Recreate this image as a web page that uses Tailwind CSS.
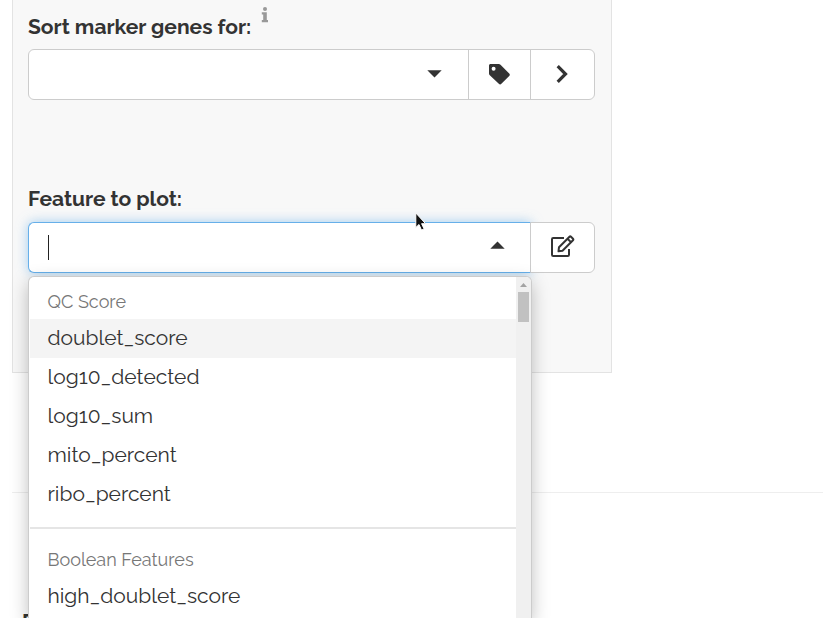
<!DOCTYPE html>
<html lang="en">
<head>
<meta charset="utf-8">
<title>Marker genes</title>
<script src="https://cdn.jsdelivr.net/npm/@tailwindcss/browser@4"></script>
</head>
<body class="relative h-[618px] w-[823px] overflow-hidden bg-white font-[Raleway,Lato,sans-serif] text-[21px] text-[#333]">
<main class="pl-3">
  <section class="h-[373px] w-[600px] border border-t-0 border-[#e3e3e3] bg-[#f8f8f8] px-[15px]">
    <div class="flex h-[49px] items-start pt-[12px]">
      <label class="w-[232px] font-bold leading-[30px] whitespace-nowrap">Sort marker genes for:</label>
      <svg class="-mt-[5px] ml-px h-[16px] w-[8px]" viewBox="0 0 8 16" fill="#999"><circle cx="4" cy="2" r="2"/><path d="M.8 5.2h5V13H7v2.2H.8V13h1.4V7.4H.8z"/></svg>
    </div>
    <div class="flex h-[51px] w-[567px] rounded-[6px] border border-[#ccc] bg-white">
      <div class="flex w-[439px] items-center justify-end pr-[26px]"><svg class="-mt-[1px] h-[8px] w-[15px]" viewBox="0 0 15 8" fill="#333"><path d="M.3.3h14.4L7.5 7.5z"/></svg></div>
      <button class="flex w-[62px] items-center justify-center border-l border-[#ccc]"><svg class="-mt-px h-[23px] w-[23px]" viewBox="0 0 23 23" fill="#333"><path fill-rule="evenodd" d="M2.5 1h8.2c.7 0 1.3.3 1.8.8l8.7 8.7c.8.8.8 1.7 0 2.5l-7.8 7.8c-.8.8-1.8.8-2.6 0L1.8 12.3c-.5-.5-.8-1.1-.8-1.8v-8C1 1.7 1.7 1 2.5 1zM5.6 3.7a2 2 0 1 0 0 4 2 2 0 0 0 0-4z"/></svg></button>
      <button class="flex flex-1 items-center justify-center border-l border-[#ccc]"><svg class="-mt-[2px] h-[20px] w-[14px]" viewBox="0 0 14 20" fill="none" stroke="#333" stroke-width="3.2"><path d="m1.7 2.2 7.8 7.8-7.8 7.8"/></svg></button>
    </div>
    <div class="flex h-[122px] items-end pb-[8px]"><label class="font-bold leading-[30px]">Feature to plot:</label></div>
    <div class="relative flex h-[51px] w-[567px]">
      <div class="flex w-[503px] items-center justify-between rounded-l-[6px] border border-r-0 border-[#66afe9] bg-white pl-[19px] pr-[26px] shadow-[0_0_12px_rgba(102,175,233,.6)]"><span class="h-[25px] w-px bg-[#222]"></span><svg class="-mt-[5px] h-[8px] w-[15px]" viewBox="0 0 15 8" fill="#333"><path d="M.3 7.7h14.4L7.5.5z"/></svg></div>
      <button class="-ml-px flex w-[65px] items-center justify-center rounded-r-[6px] border border-[#ccc] bg-white"><svg class="-mt-[4px] mr-px h-[24px] w-[25px]" viewBox="0 0 25 24" fill="none" stroke="#333" stroke-width="2" stroke-linejoin="round"><path d="M14 4H3.2C2.4 4 2 4.4 2 5.2v15.6c0 .8.4 1.2 1.2 1.2h14.6c.8 0 1.2-.4 1.2-1.2V15"/><path d="m9 13.2 10.5-10.5c.5-.5 1-.5 1.5 0l2 2c.5.5.5 1 0 1.5L12.5 16.7l-4 .6z"/><path d="m17.5 4.7 3.7 3.7"/></svg></button>
    </div>
  </section>
  <hr class="mt-[119px] w-[811px] border-[#eee]">
</main>
<div class="absolute left-[22px] top-[609px] h-[9px] overflow-hidden font-bold leading-[26px]">F</div>
<div class="absolute left-[28px] top-[276px] flex h-[342px] w-[504px] rounded-t-[6px] border border-b-0 border-[#ccc] bg-white pl-px shadow-[0_6px_18px_rgba(0,0,0,.25)]">
  <div class="w-[486px] text-[#333]">
    <div class="flex h-[42px] items-center pl-[17.5px] pt-[6px] text-[18px] text-[#777]"><span>QC Score</span></div>
    <div class="flex h-[39px] items-center bg-[#f4f4f4] pb-[2px] pl-[17.5px]"><span>doublet_score</span></div>
    <div class="flex h-[39px] items-center pb-[2px] pl-[17.5px]"><span>log10_detected</span></div>
    <div class="flex h-[39px] items-center pb-[2px] pl-[17.5px]"><span>log10_sum</span></div>
    <div class="flex h-[39px] items-center pb-[2px] pl-[17.5px]"><span>mito_percent</span></div>
    <div class="flex h-[39px] items-center pb-[2px] pl-[17.5px]"><span>ribo_percent</span></div>
    <div class="mt-[13px] h-[2px] bg-[#e5e5e5]"></div>
    <div class="mt-[12px] flex h-[37px] items-center pl-[17.5px] text-[18px] text-[#777]"><span>Boolean Features</span></div>
    <div class="flex h-[38px] items-center pb-[3px] pl-[17.5px]"><span>high_doublet_score</span></div>
  </div>
  <div class="flex w-[15px] flex-col items-center rounded-tr-[5px] bg-[#f0f0f0] pt-[6px]">
    <svg class="h-[4px] w-[7px]" viewBox="0 0 7 4" fill="#a3a3a3"><path d="M0 4h7L3.5 0z"/></svg>
    <div class="mt-[5px] h-[30px] w-[11px] bg-[#c1c1c1]"></div>
  </div>
</div>
<svg class="absolute left-[415px] top-[212px] h-[20px] w-[12px]" viewBox="0 0 12 20"><path d="M.8 1v14.5l3.2-3 2.5 5.6 2.6-1.2-2.5-5.2h4z" fill="#111" stroke="#fff" stroke-width="1"/></svg>
</body>
</html>
